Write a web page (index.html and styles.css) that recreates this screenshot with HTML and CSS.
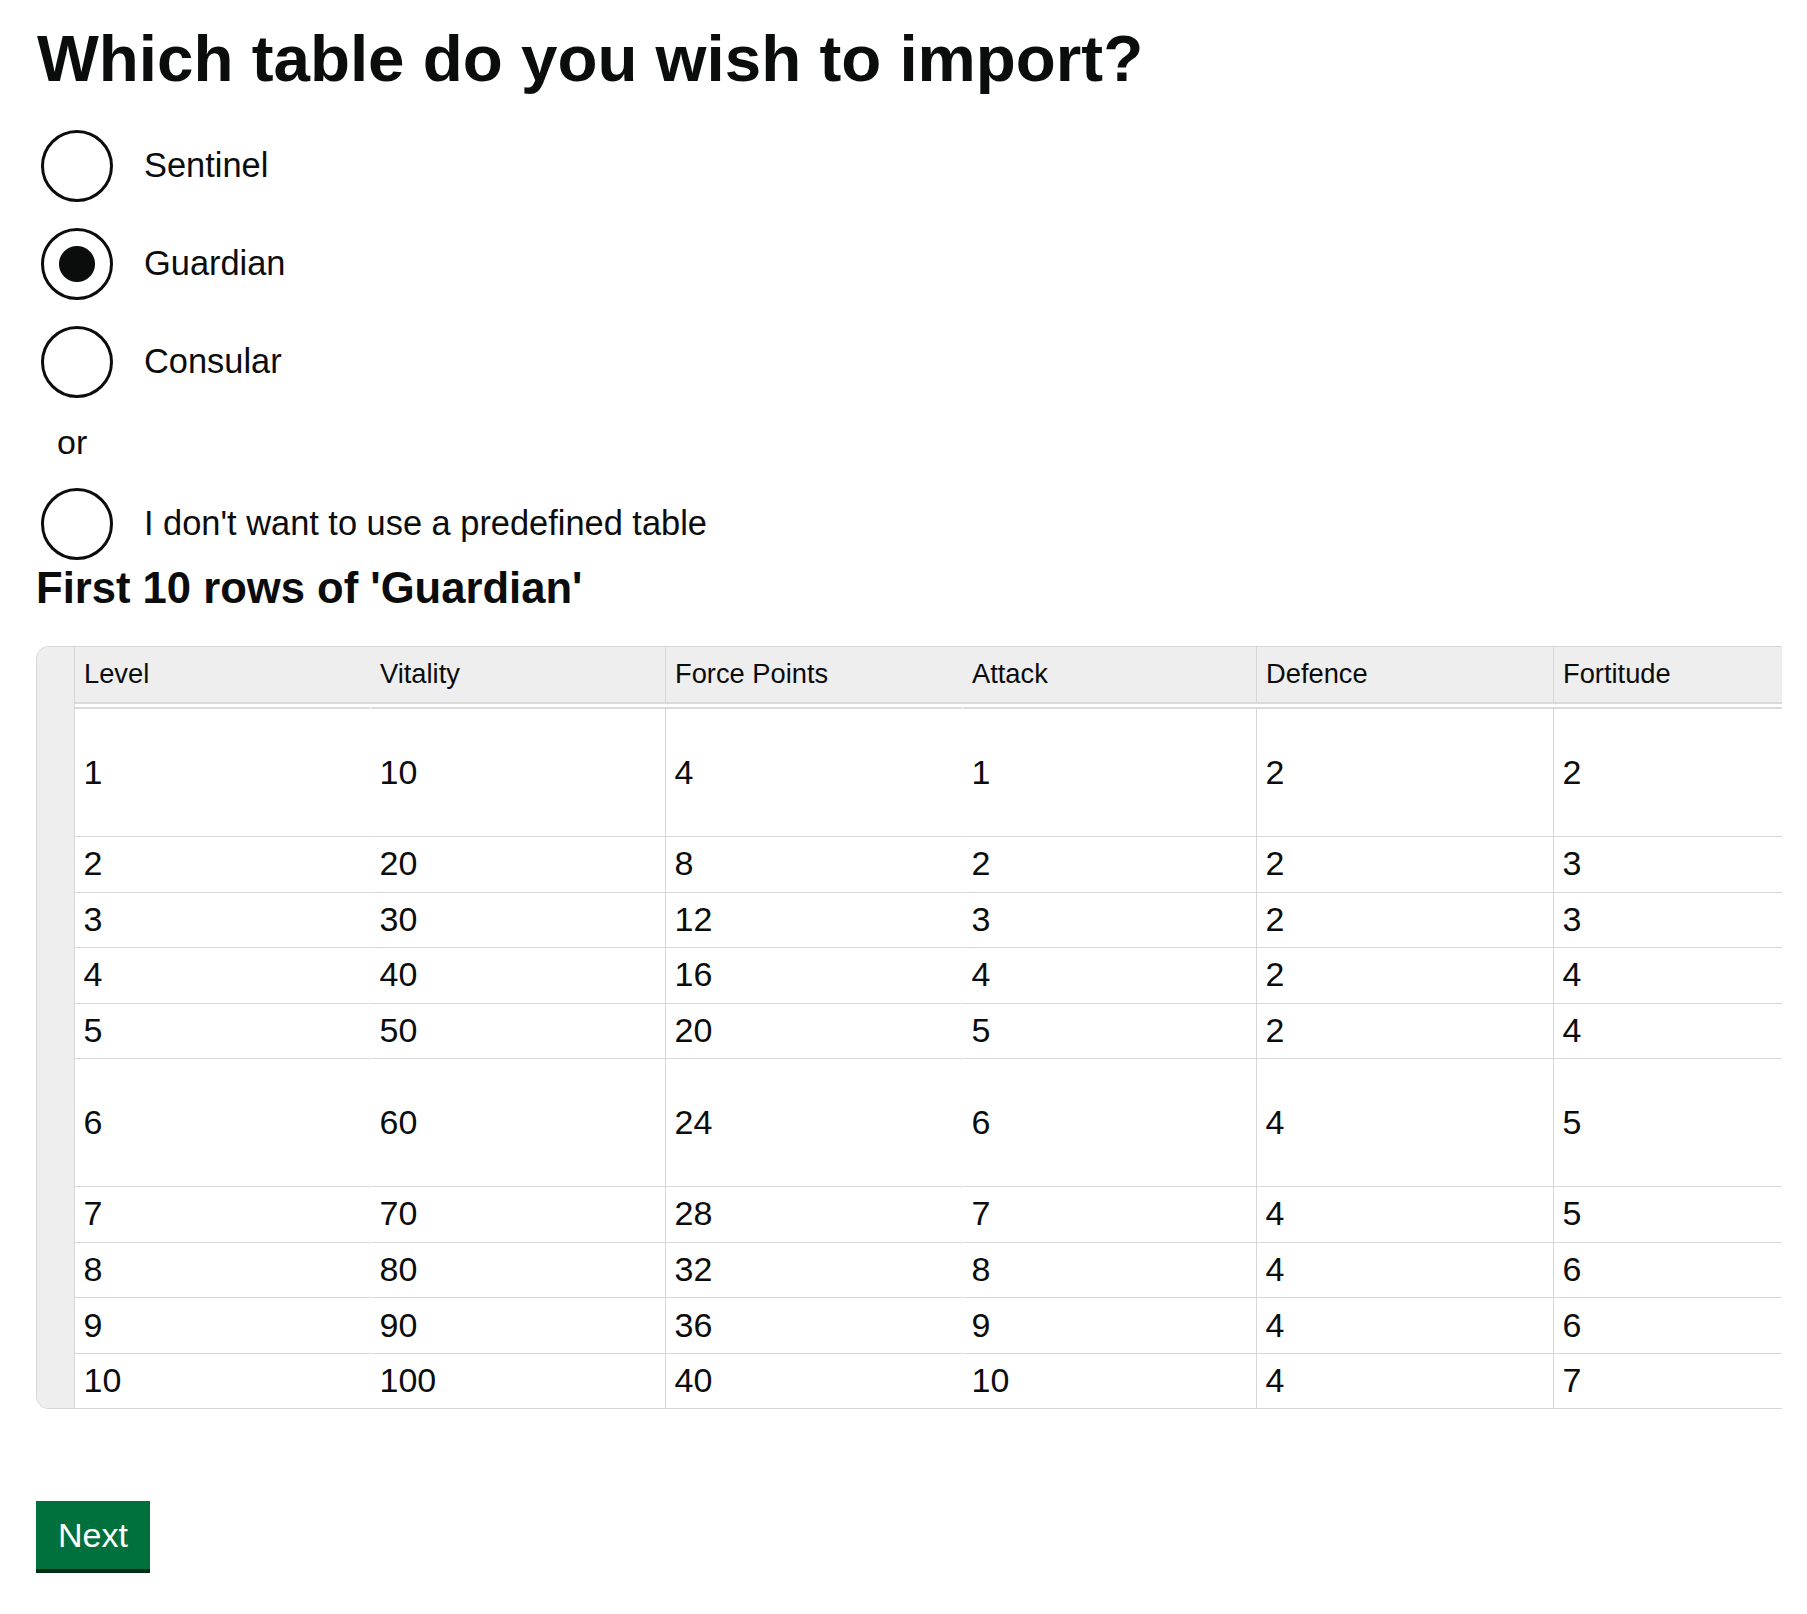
FILE: index.html
```html
<!DOCTYPE html>
<html lang="en">
<head>
<meta charset="utf-8">
<title>Import table</title>
<link rel="stylesheet" href="styles.css">
</head>
<body>
<div class="page">
  <h1 class="title">Which table do you wish to import?</h1>
  <div class="radios">
    <label class="radio"><span class="radio-input"></span><span class="radio-label">Sentinel</span></label>
    <label class="radio"><span class="radio-input is-checked"></span><span class="radio-label">Guardian</span></label>
    <label class="radio"><span class="radio-input"></span><span class="radio-label">Consular</span></label>
    <div class="or">or</div>
    <label class="radio"><span class="radio-input"></span><span class="radio-label">I don't want to use a predefined table</span></label>
  </div>
  <h2 class="subtitle">First 10 rows of 'Guardian'</h2>
  <div class="grid">
    <div class="gutter"></div>
    <div class="sheet">
      <div class="hrow">
        <div class="hcell c1">Level</div>
        <div class="hcell c2">Vitality</div>
        <div class="hcell c3">Force Points</div>
        <div class="hcell c4">Attack</div>
        <div class="hcell c5">Defence</div>
        <div class="hcell c6">Fortitude</div>
      </div>
      <div class="sep"></div>
      <div class="row first tall">
        <div class="cell c1">1</div><div class="cell c2">10</div><div class="cell c3">4</div><div class="cell c4">1</div><div class="cell c5">2</div><div class="cell c6">2</div>
      </div>
      <div class="row">
        <div class="cell c1">2</div><div class="cell c2">20</div><div class="cell c3">8</div><div class="cell c4">2</div><div class="cell c5">2</div><div class="cell c6">3</div>
      </div>
      <div class="row">
        <div class="cell c1">3</div><div class="cell c2">30</div><div class="cell c3">12</div><div class="cell c4">3</div><div class="cell c5">2</div><div class="cell c6">3</div>
      </div>
      <div class="row">
        <div class="cell c1">4</div><div class="cell c2">40</div><div class="cell c3">16</div><div class="cell c4">4</div><div class="cell c5">2</div><div class="cell c6">4</div>
      </div>
      <div class="row">
        <div class="cell c1">5</div><div class="cell c2">50</div><div class="cell c3">20</div><div class="cell c4">5</div><div class="cell c5">2</div><div class="cell c6">4</div>
      </div>
      <div class="row tall">
        <div class="cell c1">6</div><div class="cell c2">60</div><div class="cell c3">24</div><div class="cell c4">6</div><div class="cell c5">4</div><div class="cell c6">5</div>
      </div>
      <div class="row">
        <div class="cell c1">7</div><div class="cell c2">70</div><div class="cell c3">28</div><div class="cell c4">7</div><div class="cell c5">4</div><div class="cell c6">5</div>
      </div>
      <div class="row">
        <div class="cell c1">8</div><div class="cell c2">80</div><div class="cell c3">32</div><div class="cell c4">8</div><div class="cell c5">4</div><div class="cell c6">6</div>
      </div>
      <div class="row">
        <div class="cell c1">9</div><div class="cell c2">90</div><div class="cell c3">36</div><div class="cell c4">9</div><div class="cell c5">4</div><div class="cell c6">6</div>
      </div>
      <div class="row last">
        <div class="cell c1">10</div><div class="cell c2">100</div><div class="cell c3">40</div><div class="cell c4">10</div><div class="cell c5">4</div><div class="cell c6">7</div>
      </div>
    </div>
  </div>
  <button class="btn" type="button">Next</button>
</div>
</body>
</html>
```

FILE: styles.css
```css
* { box-sizing: border-box; }

html, body {
  margin: 0;
  padding: 0;
  background: #ffffff;
}

body {
  font-family: "Liberation Sans", Arial, Helvetica, sans-serif;
  color: #0b0c0c;
}

.page {
  padding: 23px 0 0 36px;
  min-height: 1614px;
}

.title {
  margin: 0 0 0 1px;
  font-size: 65.5px;
  line-height: 72px;
  font-weight: 700;
  white-space: nowrap;
}

.radios {
  margin-top: 35px;
  display: flex;
  flex-direction: column;
  gap: 26px;
}

.radio {
  display: flex;
  align-items: center;
  gap: 31px;
  height: 72px;
  margin-left: 5px;
}

.radio-input {
  flex: none;
  width: 72px;
  height: 72px;
  border: 3px solid #0b0c0c;
  border-radius: 50%;
  background: #ffffff;
}

.radio-input.is-checked {
  background: radial-gradient(circle, #0b0c0c 0, #0b0c0c 17.5px, #ffffff 18.5px);
}

.radio-label {
  font-size: 34.4px;
  line-height: 40px;
  padding-bottom: 2px;
}

.or {
  font-size: 34px;
  line-height: 38px;
  padding-left: 21px;
  margin-top: -1px;
  margin-bottom: 1px;
}

.subtitle {
  margin: 3px 0 0 0;
  font-size: 43.6px;
  line-height: 50px;
  font-weight: 700;
}

.grid {
  margin-top: 33px;
  width: 1746px;
  display: flex;
  border-top: 1px solid #d6d6d6;
  border-left: 1px solid #d6d6d6;
  border-bottom: 1px solid #d6d6d6;
  border-radius: 13px 0 0 13px;
  overflow: hidden;
}

.gutter {
  flex: none;
  width: 38px;
  background: #eeeeee;
  border-right: 1px solid #d6d6d6;
}

.sheet {
  flex: 1;
  overflow: hidden;
  min-width: 0;
}

.hrow,
.row {
  display: flex;
  width: max-content;
}

.hrow {
  background: #eeeeee;
  height: 57px;
  border-bottom: 2px solid #dadada;
}

.sep {
  height: 3.3px;
  background: #ffffff;
}

.hcell,
.cell {
  flex: none;
  display: flex;
  align-items: center;
  white-space: nowrap;
}

.hcell {
  height: 55px;
  font-size: 27.3px;
  padding-left: 9px;
  padding-bottom: 1px;
}

.cell {
  height: 55.6px;
  font-size: 34px;
  padding-left: 8.5px;
  padding-bottom: 1px;
  border-bottom: 1px solid #d6d6d6;
  background: #ffffff;
}

.row.tall .cell { height: 127.7px; }
.row.first .cell { border-top: 2px solid #dadada; height: 129.7px; }
.row.last .cell { border-bottom: 0; height: 54.6px; }

.c1 { width: 295px; margin-right: 1px; }
.c2 { width: 295px; border-right: 1px solid #d6d6d6; }
.c3 { width: 296px; margin-right: 1px; }
.c4 { width: 294px; border-right: 1px solid #d6d6d6; }
.c5 { width: 297px; border-right: 1px solid #d6d6d6; }
.c6 { width: 296px; }

.hrow .c1,
.hrow .c3 { margin-right: 0; padding-right: 1px; width: 296px; }
.hrow .c3 { width: 297px; }

.btn {
  display: block;
  margin-top: 92px;
  height: 68px;
  padding: 0 22px;
  border: 0;
  border-radius: 0;
  background: #00703c;
  box-shadow: 0 4px 0 #002d18;
  color: #ffffff;
  font-family: "Liberation Sans", Arial, Helvetica, sans-serif;
  font-size: 34px;
  line-height: 68px;
  cursor: pointer;
}
```
